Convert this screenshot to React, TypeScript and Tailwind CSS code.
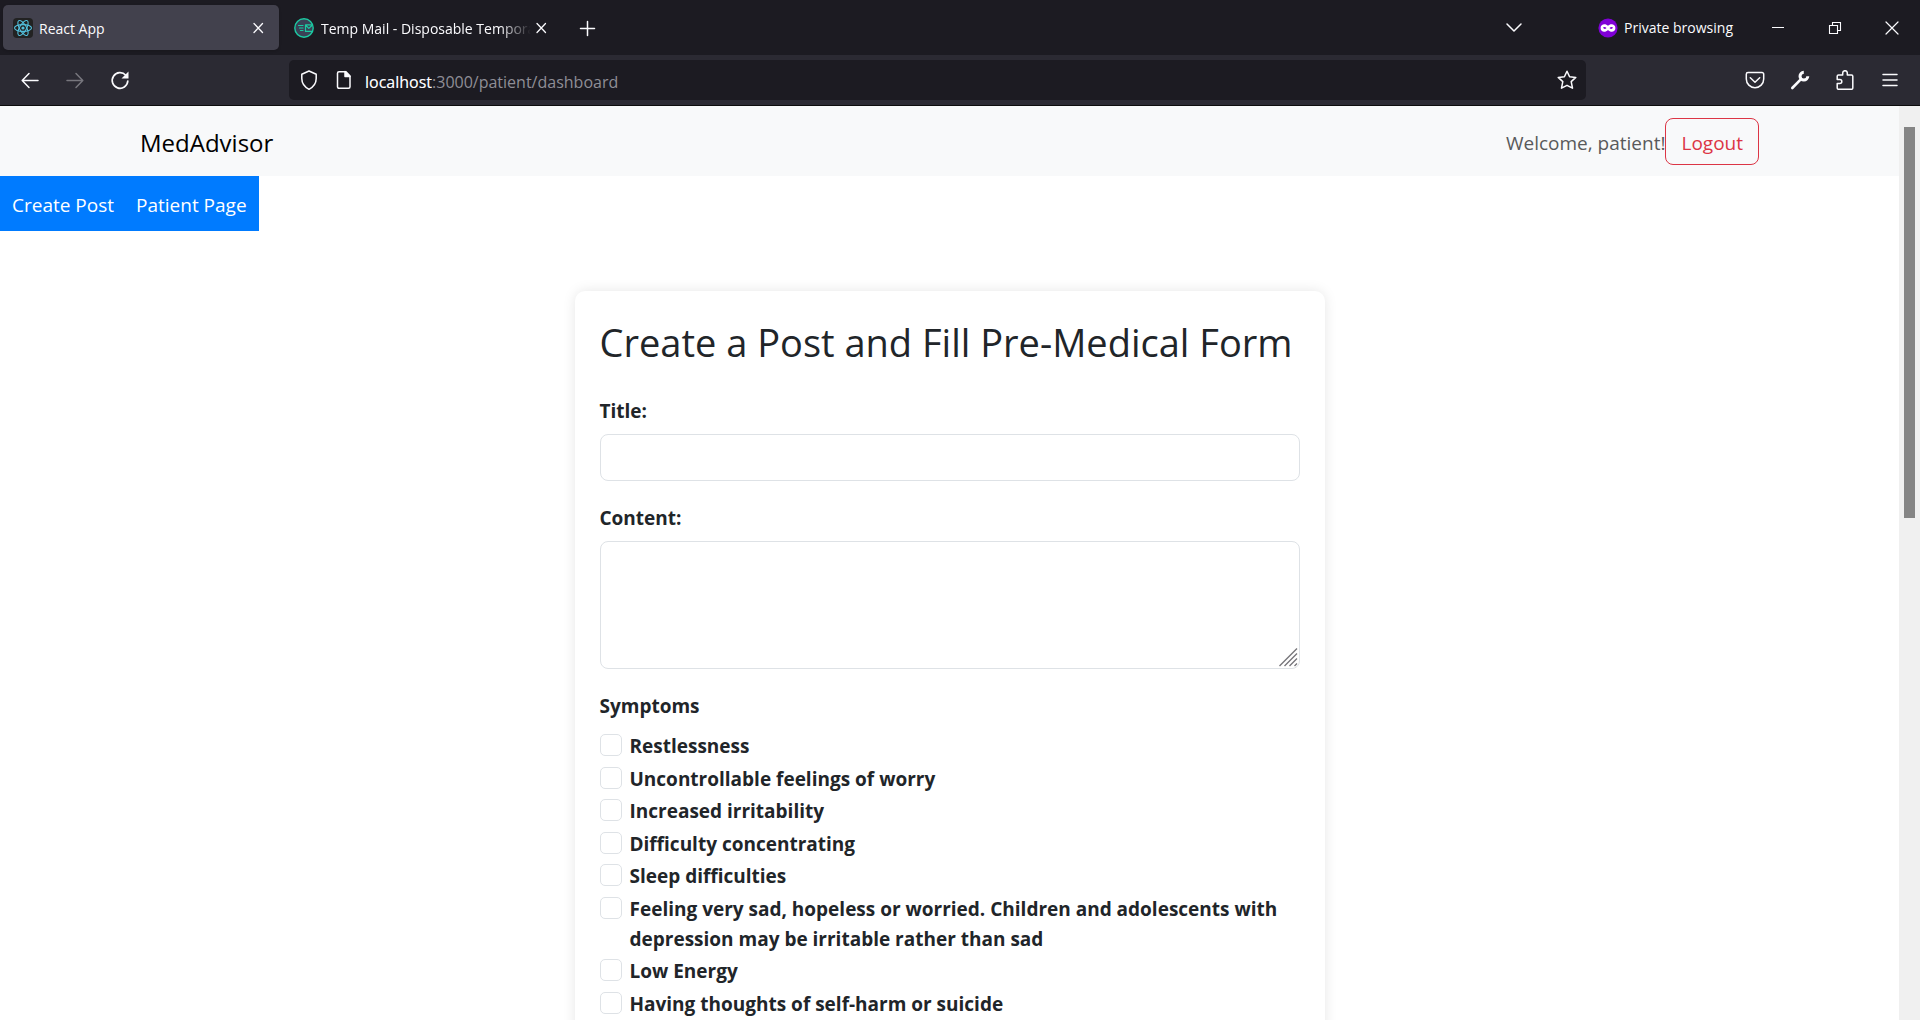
import React from 'react';

const symptoms = [
  'Restlessness',
  'Uncontrollable feelings of worry',
  'Increased irritability',
  'Difficulty concentrating',
  'Sleep difficulties',
  'Feeling very sad, hopeless or worried. Children and adolescents with depression may be irritable rather than sad',
  'Low Energy',
  'Having thoughts of self-harm or suicide',
];

type IconProps = { children: React.ReactNode; size?: number; className?: string };

function Icon({ children, size = 20, className = '' }: IconProps) {
  return (
    <svg
      width={size}
      height={size}
      viewBox="0 0 20 20"
      fill="none"
      stroke="currentColor"
      strokeWidth="1.5"
      strokeLinecap="round"
      strokeLinejoin="round"
      className={`block shrink-0 ${className}`}
      aria-hidden="true"
    >
      {children}
    </svg>
  );
}

const CloseTab = () => (
  <Icon><path d="M6 5.5l8.5 9M14.5 5.5l-8.5 9" strokeWidth="1.3" /></Icon>
);

const ReactLogo = () => (
  <Icon className="rounded-sm bg-[#222] text-[#53c1de]">
    <g strokeWidth="1.1">
      <ellipse cx="10" cy="10" rx="8.5" ry="3.4" />
      <ellipse cx="10" cy="10" rx="8.5" ry="3.4" transform="rotate(60 10 10)" />
      <ellipse cx="10" cy="10" rx="8.5" ry="3.4" transform="rotate(120 10 10)" />
    </g>
    <circle cx="10" cy="10" r="1.6" fill="currentColor" stroke="none" />
  </Icon>
);

const MailLogo = () => (
  <Icon className="text-[#1ccaa2]">
    <circle cx="10" cy="10" r="9.2" fill="#3a4156" strokeWidth="1.4" />
    <path d="M4.500 7.500h4.500M5.500 10h3.500M6.500 12.500H9M18 6.800h-6.500v6.600H18M11.500 7l3.300 3.400L18 7.500" strokeWidth="1.200" />
  </Icon>
);

function BrowserChrome() {
  return (
    <header className="text-[#fbfbfe]">
      <div className="flex h-[55px] items-center bg-[#1c1b22] text-[14px]">
        <div className="ml-[3px] flex h-[45px] w-[276px] items-center rounded-[5px] bg-[#42414d] pl-[10px] pr-[11px] shadow">
          <ReactLogo />
          <span className="ml-[6px] flex-1 pt-[2px]">React App</span>
          <button type="button" aria-label="Close React App tab"><CloseTab /></button>
        </div>
        <div className="ml-[5px] flex h-[45px] w-[276px] items-center pl-[10px] pr-[9px]">
          <MailLogo />
          <span className="ml-[7px] w-[210px] overflow-hidden whitespace-nowrap pt-[2px] [mask-image:linear-gradient(to_right,black_85%,transparent)]">
            Temp Mail - Disposable Temporary
          </span>
          <button type="button" aria-label="Close Temp Mail tab"><CloseTab /></button>
        </div>
        <button type="button" aria-label="New tab" className="ml-[17px]">
          <Icon><path d="M10.500 3.500v14M3.500 10.500h14" /></Icon>
        </button>
        <button type="button" aria-label="List all tabs" className="ml-auto">
          <Icon><path d="M3 6l7 7 7-7" /></Icon>
        </button>
        <div className="ml-[74px] flex items-center">
          <Icon>
            <circle cx="10" cy="10" r="9.600" fill="#8000d7" stroke="none" />
            <path d="M10 7.800C8 5.400 2.600 5.500 2.600 10s5 4.700 7.400 2c2.400 2.700 7.400 2.500 7.400-2s-5.400-4.600-7.400-2.200z" fill="#fff" stroke="none" />
            <path d="M4.900 9.800q1.600-1.500 3.600.2-1.900 1.900-3.600-.2zM11.500 10q2-1.700 3.600-.2-1.700 2.100-3.600.2z" fill="#8000d7" stroke="none" />
          </Icon>
          <span className="ml-[6px]">Private browsing</span>
        </div>
        <div className="ml-[35px] mr-[18px] flex gap-[37px]">
          <button type="button" aria-label="Minimize"><Icon><path d="M4 9.500h12" strokeWidth="1" strokeLinecap="butt" /></Icon></button>
          <button type="button" aria-label="Restore">
            <Icon><path d="M4.500 7.500h8v8h-8zM7.500 7.500v-3h8v8h-3" strokeWidth="1.100" strokeLinejoin="miter" /></Icon>
          </button>
          <button type="button" aria-label="Close window"><Icon><path d="M4 4l12 12M16 4L4 16" strokeWidth="1.200" /></Icon></button>
        </div>
      </div>

      <div className="flex h-[51px] items-center border-b border-[#0c0c0d] bg-[#2b2a33]">
        <div className="flex w-[289px] items-center gap-[25px] pl-[20px]">
          <button type="button" aria-label="Back"><Icon><path d="M18 10.500H2.500M9 3.500l-6.800 7 6.800 7" /></Icon></button>
          <button type="button" aria-label="Forward" disabled className="text-[#77767d]">
            <Icon><path d="M2 10.500h15.500M11 3.500l6.800 7-6.800 7" /></Icon>
          </button>
          <button type="button" aria-label="Reload">
            <Icon><path d="M15.800 5.200A7.800 7.800 0 1 0 17.800 11" strokeWidth="1.700" /><path d="M18.500 1.500v7h-7z" fill="currentColor" stroke="none" /></Icon>
          </button>
        </div>
        <div className="flex h-10 flex-1 items-center rounded-[5px] bg-[#1c1b22] pl-[10px] pr-[9px]">
          <Icon><path d="M10 1l7.200 3.200v4.300c0 5-2.900 8.500-7.200 10.800-4.300-2.300-7.200-5.800-7.200-10.800V4.200z" /></Icon>
          <Icon className="ml-[15px]">
            <path d="M12 1.700H5a1.500 1.500 0 0 0-1.500 1.500v13.600A1.500 1.500 0 0 0 5 18.300h9.500a1.500 1.500 0 0 0 1.500-1.500V6z" />
            <path d="M11 1.500v5h5z" fill="currentColor" />
          </Icon>
          <div className="relative ml-[11px] flex-1 pt-[3px] text-[16px] leading-6">
            <input aria-label="Address" defaultValue="localhost:3000/patient/dashboard" className="block w-full bg-transparent text-[#8f8e96] outline-none" />
            <span aria-hidden="true" className="pointer-events-none absolute left-0 top-[3px]">localhost</span>
          </div>
          <button type="button" aria-label="Bookmark this page">
            <Icon><path d="M10 1.200l2.600 5.500 6.200.7-4.600 4.200 1.300 6.600L10 15.300l-5.500 2.900 1.300-6.600L1.200 7.400l6.200-.7z" /></Icon>
          </button>
        </div>
        <div className="flex w-[334px] items-center justify-end gap-[25px] pr-[20px]">
          <button type="button" aria-label="Save to Pocket">
            <Icon><path d="M3 2.500h14a1.700 1.700 0 0 1 1.700 1.700V9A8.700 8.700 0 0 1 1.300 9V4.200A1.700 1.700 0 0 1 3 2.500zM5.300 7.800L10 12.300l4.700-4.500" /></Icon>
          </button>
          <button type="button" aria-label="Developer tools">
            <Icon>
              <path d="M2.300 18L11 9.200" strokeWidth="2.600" />
              <path d="M13.800 2.300a3.900 3.900 0 1 0 4 4" strokeWidth="3" strokeLinecap="butt" />
            </Icon>
          </button>
          <button type="button" aria-label="Extensions">
            <Icon><path d="M2.200 13.500V18a1.300 1.300 0 0 0 1.300 1.300h13A1.300 1.300 0 0 0 17.800 18V6.300A1.300 1.300 0 0 0 16.500 5h-4.200V3a2.300 2.300 0 0 0-4.600 0v2H3.500a1.300 1.300 0 0 0-1.300 1.300v3.200h2.600a2 2 0 0 1 0 4z" /></Icon>
          </button>
          <button type="button" aria-label="Open application menu"><Icon><path d="M3 4.500h14M3 10h14M3 15.500h14" /></Icon></button>
        </div>
      </div>
    </header>
  );
}

function ResizeGrip() {
  return (
    <svg
      width="19"
      height="19"
      viewBox="0 0 19 19"
      stroke="#77767b"
      strokeWidth="1.4"
      className="pointer-events-none absolute bottom-[2px] right-[2px]"
      aria-hidden="true"
    >
      <path d="M0.500 18L18 0.500M5.500 18L18 5.500M10.500 18L18 10.500M15.500 18L18 15.500" />
    </svg>
  );
}

export default function App() {
  return (
    <div className="flex h-screen flex-col overflow-hidden bg-white font-['Open_Sans','Noto_Sans',sans-serif]">
      <BrowserChrome />
      <div className="flex min-h-0 flex-1">
        <div className="min-w-0 flex-1 overflow-hidden text-[19px] leading-[30px] text-[#212529]">
          <nav className="flex h-[70px] items-center justify-between bg-[#f8f9fa] px-[140px]">
            <a href="#home" className="pt-[3px] text-[24px] text-black">MedAdvisor</a>
            <div className="flex items-center">
              <span className="pt-[3px] text-[#595a5b]">Welcome, patient!</span>
              <button type="button" className="h-[47px] rounded-[8px] border border-[#dc3545] px-[15px] pt-[3px] text-[#dc3545]">Logout</button>
            </div>
          </nav>
          <div className="flex">
            <nav className="flex h-[55px] items-center gap-[22px] bg-[#007bff] px-[12px] pt-[2px] text-white">
              <a href="#create">Create Post</a>
              <a href="#patient">Patient Page</a>
            </nav>
          </div>
          <main className="mx-auto mt-[60px] w-[750px] rounded-[10px] p-[25px] shadow-[0_0_13px_rgba(0,0,0,0.1)]">
            <h1 className="mb-[28px] whitespace-nowrap text-[38px] leading-[52px]">Create a Post and Fill Pre-Medical Form</h1>
            <form className="font-bold">
              <label htmlFor="title" className="mb-[8px] block">Title:</label>
              <input id="title" type="text" className="mb-[22px] block h-[47px] w-full rounded-[8px] border border-[#dee2e6] px-[15px] font-normal" />
              <label htmlFor="content" className="mb-[8px] block">Content:</label>
              <div className="relative mb-[22px]">
                <textarea id="content" className="block h-[128px] w-full rounded-[8px] border border-[#dee2e6] px-[15px] font-normal [&::-webkit-resizer]:hidden" />
                <ResizeGrip />
              </div>
              <fieldset>
                <legend className="mb-[10px]">Symptoms</legend>
                <div>
                  {symptoms.map((s, i) => (
                    <div key={s} className="flex items-start gap-[8px] odd:mb-[3px] even:mb-[2px]">
                      <input id={`symptom-${i}`} type="checkbox" className="mt-[3px] size-[22px] shrink-0 appearance-none rounded-[5px] border border-[#dee2e6] checked:bg-[#0d6efd]" />
                      <label htmlFor={`symptom-${i}`}>{s}</label>
                    </div>
                  ))}
                </div>
              </fieldset>
            </form>
          </main>
        </div>
        <div className="w-[21px] bg-[#f0f0f0] px-[5px] pt-[21px]">
          <div className="h-[391px] w-[11px] bg-[#858585]" />
        </div>
      </div>
    </div>
  );
}
